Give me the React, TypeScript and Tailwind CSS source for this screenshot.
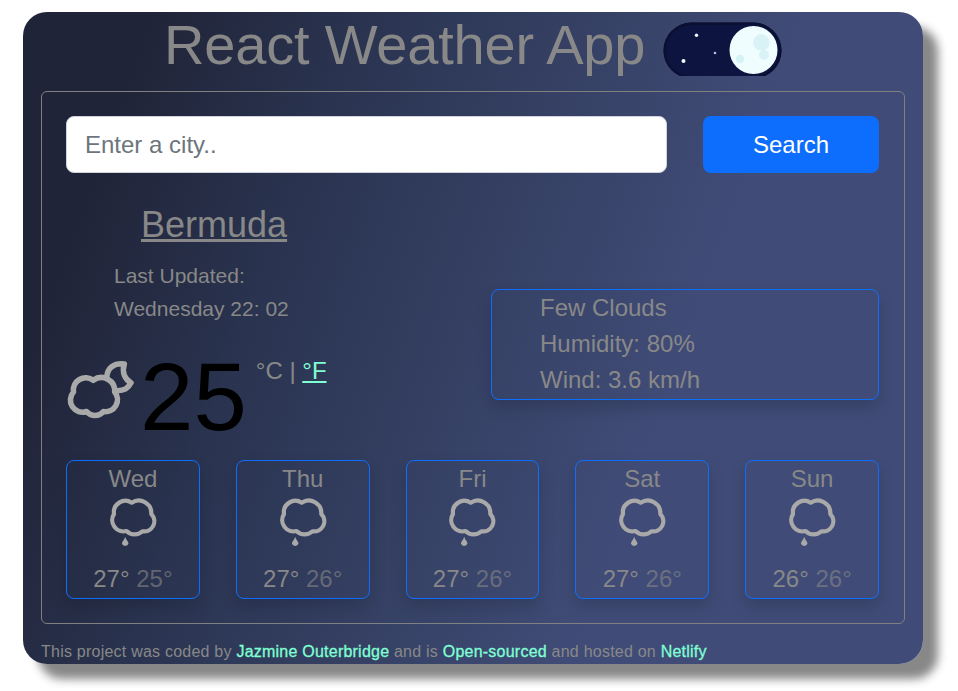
import React from "react";

const forecast = [
  { day: "Wed", max: 27, min: 25 },
  { day: "Thu", max: 27, min: 26 },
  { day: "Fri", max: 27, min: 26 },
  { day: "Sat", max: 27, min: 26 },
  { day: "Sun", max: 26, min: 26 },
];

function RainIcon() {
  return (
    <svg width="52" height="52" viewBox="0 0 52 52" fill="none" className="mt-px">
      <path
        d="M7 16 A11.500 11.500 0 0 1 24.700 4.700 A12.600 12.600 0 0 1 44.300 16 A10.200 10.200 0 0 1 35.500 33.300 A11.400 11.400 0 0 1 19.500 33 A11.300 11.300 0 0 1 7 16 Z"
        stroke="#a9a9a9"
        strokeWidth="4.200"
        strokeLinejoin="round"
      />
      <path d="M18.200 38.800 C18.800 41.800 21.500 43.500 21.500 45.500 A3.400 3.200 0 0 1 14.900 45.500 C14.900 43.500 17.600 41.800 18.200 38.800 Z" fill="#a9a9a9" />
    </svg>
  );
}

function CloudMoonIcon() {
  return (
    <svg width="70" height="62" viewBox="0 0 70 62" fill="none" stroke="#a9a9a9" strokeWidth="5.600" strokeLinejoin="round">
      <path d="M7.500 32 A12.400 12.400 0 0 1 27.300 20.300 A13.400 13.400 0 0 1 48.700 32 A12 12 0 0 1 37.500 51.500 A11 11 0 0 1 20.500 51.500 A12.100 12.100 0 0 1 7.500 32 Z" />
      <path d="M40.800 17.500 C41 8 48 2.800 58.300 4 C55.500 13 59.500 19.500 65 22.800 C62 28.500 58.500 30.500 51 30.700" />
    </svg>
  );
}

function NightToggle() {
  return (
    <svg width="119" height="54" viewBox="0 0 119 54">
      <defs>
        <clipPath id="track"><rect x="0.500" y="0.500" width="118" height="56" rx="28" /></clipPath>
      </defs>
      <g clipPath="url(#track)">
        <rect width="119" height="57" fill="#0d1440" />
        <rect x="0.500" y="0.500" width="118" height="56" rx="28" fill="none" stroke="#0b1033" strokeWidth="5" />
      </g>
      <circle cx="33.500" cy="13.200" r="1.700" fill="#eefcff" />
      <circle cx="20.500" cy="39" r="2" fill="#eefcff" />
      <circle cx="52" cy="31" r="1.300" fill="#b6c0d0" />
      <circle cx="90.500" cy="28" r="24" fill="#effdff" />
      <circle cx="98.300" cy="20.500" r="8.200" fill="#d9f2f6" />
      <circle cx="101" cy="33" r="5" fill="#d9f2f6" />
      <circle cx="77" cy="37" r="4.200" fill="#d5f2f7" />
    </svg>
  );
}

export default function App() {
  return (
    <div className="h-[691px] w-[958px] overflow-hidden bg-white pt-3 pl-[23px] font-['Liberation_Sans',Arial,sans-serif] text-[#888888]">
      <main className="h-[652px] w-[900px] rounded-[24px] bg-[linear-gradient(109.6deg,#202438_11.2%,#2b3552_32%,#404c77_69%)] px-[18px] shadow-[15px_15px_10px_#888888]">
        <header className="flex h-[79px] items-start pl-[123px]">
          <h1 className="text-[56px] leading-[65px] tracking-[-0.2px] whitespace-nowrap">React Weather App</h1>
          <div className="ml-[17.5px] pt-[10px]"><NightToggle /></div>
        </header>

        <section className="h-[533px] rounded-[6px] border border-[#808080] pt-6 pr-[25px] pl-6">
          <form className="flex gap-9" onSubmit={(e) => e.preventDefault()}>
            <input
              type="text"
              placeholder="Enter a city.."
              className="h-[57px] w-[601px] rounded-lg border border-[#ced4da] bg-white px-[18px] text-[24px] placeholder:text-[#6c757d]"
            />
            <button className="h-[57px] w-[176px] rounded-lg bg-[#0d6efd] text-[24px] text-white">Search</button>
          </form>

          <div className="flex h-[287px] justify-between">
            <div className="pt-[30px]">
              <h2 className="pl-[75px] text-[36px] leading-[43px] underline">Bermuda</h2>
              <div className="mt-[13px] pl-12 text-[21px] leading-[33px]">
                <p>Last Updated:</p>
                <p>Wednesday 22: 02</p>
              </div>
              <div className="mt-[12px] flex items-start">
                <div className="mt-[23px] w-[74px]"><CloudMoonIcon /></div>
                <span className="mt-0.5 text-[96px] leading-[115px] text-black">25</span>
                <span className="mt-[16px] ml-[9px] text-[24px] leading-[36px]">
                  °C | <a className="text-[#7fffd4] underline">°F</a>
                </span>
              </div>
            </div>
            <ul className="mt-[116px] h-[111px] w-[388px] rounded-lg border border-[#0d6efd] pl-12 text-[24px] leading-[36px] shadow-[0_8px_16px_rgba(0,0,0,0.15)]">
              <li>Few Clouds</li>
              <li>Humidity: 80%</li>
              <li>Wind: 3.6 km/h</li>
            </ul>
          </div>

          <div className="grid grid-cols-5 gap-9">
            {forecast.map(({ day, max, min }) => (
              <div key={day} className="flex h-[139px] flex-col items-center rounded-lg border border-[#0d6efd] text-[24px] leading-[36px] shadow-[0_8px_16px_rgba(0,0,0,0.15)]">
                <div>{day}</div>
                <RainIcon />
                <div className="mt-[11px] whitespace-nowrap">
                  {max}° <span className="opacity-60">{min}°</span>
                </div>
              </div>
            ))}
          </div>
        </section>

        <footer className="pt-4 text-[16px] leading-6 tracking-[0.23px]">
          This project was coded by <a className="text-[#7fffd4] [-webkit-text-stroke:0.3px]">Jazmine Outerbridge</a> and is{" "}
          <a className="text-[#7fffd4] [-webkit-text-stroke:0.3px]">Open-sourced</a> and hosted on{" "}
          <a className="text-[#7fffd4] [-webkit-text-stroke:0.3px]">Netlify</a>
        </footer>
      </main>
    </div>
  );
}
